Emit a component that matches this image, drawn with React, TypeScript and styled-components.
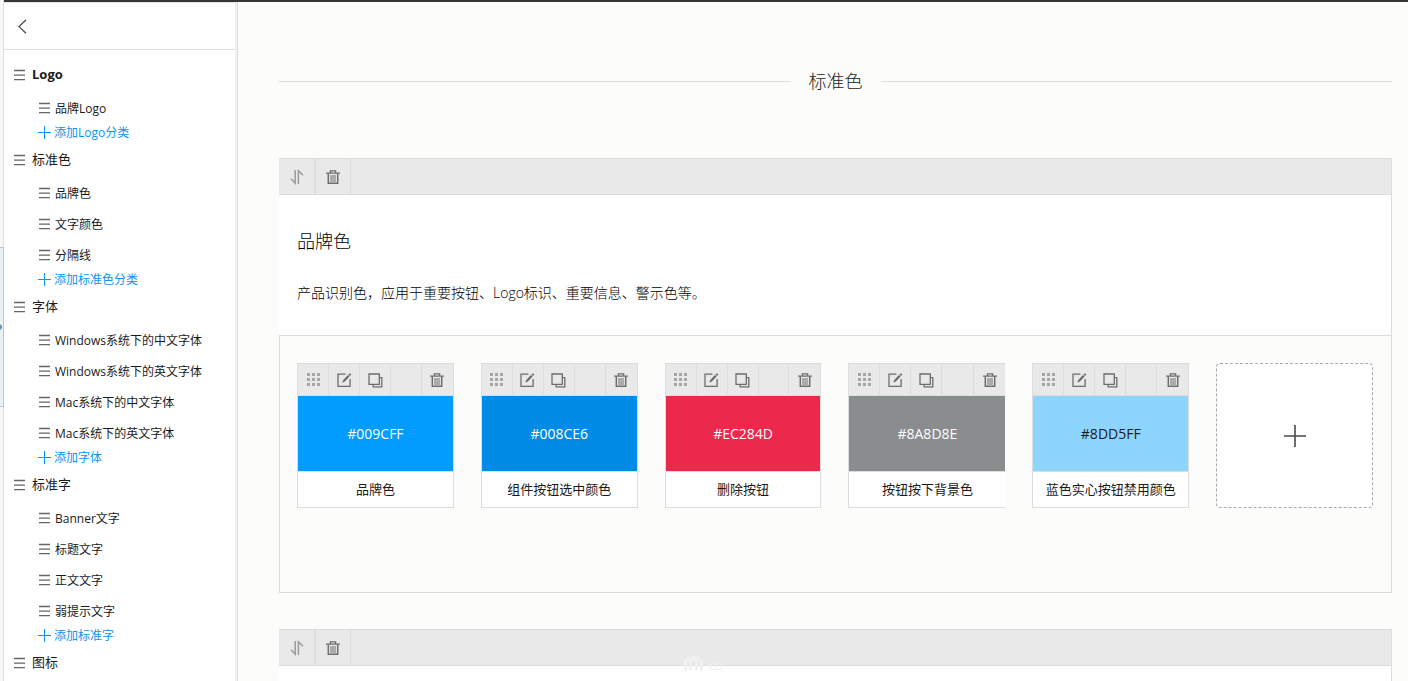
import React from 'react';
import styled, { createGlobalStyle } from 'styled-components';

const LINE = '#dddddd';

const GlobalStyle = createGlobalStyle`
  *, *::before, *::after { box-sizing: border-box; }
  body {
    margin: 0;
    background: #fcfcfa;
    color: #1a1a1a;
    font-family: "Open Sans", "Noto Sans CJK SC", sans-serif;
    font-size: 12px;
  }
  h1, h2, p, ul { margin: 0; padding: 0; }
  ul { list-style: none; }
  button { padding: 0; border: 0; background: none; font: inherit; color: inherit; cursor: pointer; }
  a { color: inherit; text-decoration: none; }
  svg { display: block; flex: none; }
`;

/* ---------- icons ---------- */

const MenuIcon = () => (
  <svg width="11" height="13" viewBox="0 0 11 13" stroke="#666" strokeWidth="1.4" aria-hidden="true">
    <path d="M0 2.5h11M0 7.1h11M0 11.6h11" />
  </svg>
);

const BackIcon = () => (
  <svg width="10" height="16" viewBox="0 0 10 16" fill="none" stroke="#444" strokeWidth="1.2" aria-hidden="true">
    <path d="M8 2 1 8.6l7 6.6" />
  </svg>
);

const PlusIcon = ({ size }: { size: number }) => (
  <svg width={size} height={size} viewBox={`0 0 ${size} ${size}`} stroke="currentColor" aria-hidden="true"
    strokeWidth={size > 16 ? 1.6 : 1.1}>
    <path d={`M0 ${size / 2}H${size}M${size / 2} 0V${size}`} />
  </svg>
);

const SortIcon = () => (
  <svg width="14" height="16" viewBox="0 0 14 16" fill="none" stroke="#9a9a9a" strokeWidth="1.5" aria-hidden="true">
    <path d="M5.2 1v13.2L1 9.8M8.4 15V1.8l4.6 4.4" />
  </svg>
);

const TrashIcon = () => (
  <svg width="14" height="16" viewBox="0 -1 14 16" fill="none" stroke="#6c6c6c" aria-hidden="true">
    <path strokeWidth="1.3" d="M0 3.1h14M4.4 3V.9h5.2V3" />
    <path strokeWidth="1.5" d="M2.3 3.5v9.8h9.4V3.5" />
    <path strokeWidth="1" d="M5 5v7M7 5v7M9 5v7" />
  </svg>
);

const EditIcon = () => (
  <svg width="15" height="16" viewBox="0 -1 15 16" fill="none" stroke="#6c6c6c" strokeWidth="1.3" aria-hidden="true">
    <path d="M8.5 1.2H1v12.2h12.1V6" />
    <path fill="#6c6c6c" stroke="none" d="M12.7.2l1.6 1.4-1.3 1.4-1.6-1.4zM10.9 2.1l1.7 1.5-4.8 5-2.6 1.1 1-2.7z" />
  </svg>
);

const CopyIcon = () => (
  <svg width="15" height="16" viewBox="0 -1 15 16" fill="none" stroke="#6c6c6c" strokeWidth="1.3" aria-hidden="true">
    <path d="M1 1h10.3v10.3H1zM12 4.7h1.8v9.2H5.2V12" />
  </svg>
);

const GridIcon = () => (
  <svg width="13" height="13" viewBox="0 0 13 13" fill="#a6a6a6" aria-hidden="true">
    {[0, 5, 10].map(y => [0, 5, 10].map(x => <rect key={`${x}-${y}`} x={x} y={y} width="3" height="3" />))}
  </svg>
);

/* ---------- frame ---------- */

const Page = styled.div`
  display: flex;
  height: 100vh;
  overflow: hidden;
`;

const Rail = styled.div`
  flex: none;
  width: 4px;
  padding-top: 247px;
  background: #f7f9f8;
  border-right: 1px solid #dcdfdf;
`;

const RailHandle = styled.button`
  display: flex;
  align-items: center;
  width: 4px;
  height: 160px;
  background: #ebf0f5;
  border: 1px solid #b9cad6;
  border-left: 0;
`;

const Workspace = styled.div`
  flex: 1;
  display: flex;
  min-width: 0;
  border-top: 2px solid #363636;
`;

/* ---------- sidebar ---------- */

const Sidebar = styled.nav`
  flex: none;
  width: 234px;
  overflow: hidden;
  background: #fff;
  border-top: 1px solid #e4e4e4;
  border-right: 1px solid ${LINE};
  box-shadow: inset -2px 0 0 #f1f1f1;
`;

const SidebarHead = styled.div`
  display: flex;
  align-items: center;
  height: 47px;
  margin-right: 2px;
  padding-left: 14px;
  border-bottom: 1px solid ${LINE};
`;

const Groups = styled.ul`
  padding-top: 6px;
`;

const GroupLink = styled.a<{ $active?: boolean }>`
  display: flex;
  align-items: center;
  gap: 7px;
  height: 36px;
  padding-left: 10px;
  font-size: 13px;
  line-height: 18px;
  font-weight: ${p => (p.$active ? 700 : 400)};
`;

const ItemLink = styled.a`
  display: flex;
  align-items: center;
  gap: 5px;
  height: 31px;
  padding-left: 35px;
`;

const AddButton = styled.button`
  display: flex;
  align-items: center;
  gap: 3px;
  height: 18px;
  padding-left: 34px;
  color: #0a96f5;
`;

/* ---------- content ---------- */

const Main = styled.main`
  flex: 1;
  min-width: 0;
  overflow: hidden;
  padding: 66px 16px 0 41px;
`;

const PageTitle = styled.h1`
  display: flex;
  align-items: center;
  gap: 18px;
  margin-bottom: 64px;
  font-size: 18px;
  line-height: 26px;
  font-weight: 300;
  color: #222;
  &::before, &::after {
    content: '';
    flex: 1;
    height: 1px;
    background: ${LINE};
  }
`;

const Section = styled.section`
  position: relative;
  margin-bottom: 36px;
`;

const SectionBar = styled.div`
  display: flex;
  height: 37px;
  background: #e9e9e9;
  border: 1px solid ${LINE};
  border-left: 0;
`;

const SectionTool = styled.button`
  display: flex;
  align-items: center;
  justify-content: center;
  width: 36px;
  border-right: 1px solid ${LINE};
  & + & { border-left: 1px solid ${LINE}; }
`;

const Intro = styled.div`
  min-height: 140px;
  padding: 33px 18px 0;
  background: #fff;
  border-right: 1px solid ${LINE};
`;

const SectionTitle = styled.h2`
  margin-bottom: 28px;
  font-size: 18px;
  line-height: 26px;
  font-weight: 300;
  color: #000;
`;

const SectionText = styled.p`
  font-size: 14px;
  line-height: 22px;
  font-weight: 300;
  color: #000;
`;

const Swatches = styled.ul`
  display: grid;
  grid-template-columns: repeat(6, 1fr);
  gap: 27px;
  padding: 27px 18px 84px 17px;
  border: 1px solid ${LINE};
`;

const Card = styled.li<{ $open?: boolean }>`
  height: 145px;
  background: #fff;
  border: 1px solid ${LINE};
  border-right-width: ${p => (p.$open ? 0 : 1)}px;
`;

const CardBar = styled.div`
  display: flex;
  height: 32px;
  background: #e9e9e9;
  border-bottom: 1px solid ${LINE};
`;

const CardTool = styled.button<{ $last?: boolean }>`
  display: flex;
  align-items: center;
  justify-content: center;
  width: ${p => (p.$last ? 32 : 31)}px;
  border-right: ${p => (p.$last ? 0 : 1)}px solid ${LINE};
  border-left: ${p => (p.$last ? 1 : 0)}px solid ${LINE};
  margin-left: ${p => (p.$last ? 'auto' : 0)};
`;

const Colour = styled.div<{ $fill: string; $ink: string }>`
  height: 75px;
  line-height: 76px;
  text-align: center;
  font-size: 14px;
  color: ${p => p.$ink};
  background: ${p => p.$fill};
`;

const CardName = styled.p`
  height: 36px;
  line-height: 34px;
  text-align: center;
  font-size: 13px;
  white-space: nowrap;
  border-top: 1px solid ${LINE};
`;

const AddCard = styled.button`
  display: flex;
  align-items: center;
  justify-content: center;
  width: 100%;
  height: 145px;
  color: #4a4a4a;
  background: #fff;
  border: 1px dashed #aaa;
  border-radius: 4px;
`;

const Watermark = styled.div`
  position: absolute;
  top: 26px;
  left: 405px;
  display: flex;
  align-items: center;
  gap: 3px;
  color: #f0f0f0;
  line-height: 20px;
`;

/* ---------- data ---------- */

const groups = [
  { name: 'Logo', items: ['品牌Logo'], add: '添加Logo分类' },
  { name: '标准色', items: ['品牌色', '文字颜色', '分隔线'], add: '添加标准色分类' },
  {
    name: '字体',
    items: ['Windows系统下的中文字体', 'Windows系统下的英文字体', 'Mac系统下的中文字体', 'Mac系统下的英文字体'],
    add: '添加字体',
  },
  { name: '标准字', items: ['Banner文字', '标题文字', '正文文字', '弱提示文字'], add: '添加标准字' },
  { name: '图标', items: [], add: '' },
];

const swatches = [
  { hex: '#009CFF', name: '品牌色', ink: '#fff' },
  { hex: '#008CE6', name: '组件按钮选中颜色', ink: '#fff' },
  { hex: '#EC284D', name: '删除按钮', ink: '#fff' },
  { hex: '#8A8D8E', name: '按钮按下背景色', ink: '#fff', open: true },
  { hex: '#8DD5FF', name: '蓝色实心按钮禁用颜色', ink: '#1a1a1a' },
];

const SectionTools = () => (
  <SectionBar>
    <SectionTool aria-label="排序"><SortIcon /></SectionTool>
    <SectionTool aria-label="删除"><TrashIcon /></SectionTool>
  </SectionBar>
);

export default function App() {
  return (
    <>
      <GlobalStyle />
      <Page>
        <Rail>
          <RailHandle aria-label="展开">
            <svg width="2" height="6" viewBox="0 0 2 6" fill="#5f93b3" aria-hidden="true">
              <path d="M0 0l2 2v2L0 6z" />
            </svg>
          </RailHandle>
        </Rail>
        <Workspace>
          <Sidebar>
            <SidebarHead>
              <button aria-label="返回"><BackIcon /></button>
            </SidebarHead>
            <Groups>
              {groups.map((g, i) => (
                <li key={g.name}>
                  <GroupLink href="#" $active={i === 0}><MenuIcon />{g.name}</GroupLink>
                  {g.items.map(item => (
                    <ItemLink href="#" key={item}><MenuIcon />{item}</ItemLink>
                  ))}
                  {g.add && <AddButton><PlusIcon size={13} />{g.add}</AddButton>}
                </li>
              ))}
            </Groups>
          </Sidebar>
          <Main>
            <PageTitle>标准色</PageTitle>
            <Section>
              <SectionTools />
              <Intro>
                <SectionTitle>品牌色</SectionTitle>
                <SectionText>产品识别色，应用于重要按钮、Logo标识、重要信息、警示色等。</SectionText>
              </Intro>
              <Swatches>
                {swatches.map(s => (
                  <Card key={s.hex} $open={s.open}>
                    <CardBar>
                      <CardTool aria-label="拖动"><GridIcon /></CardTool>
                      <CardTool aria-label="编辑"><EditIcon /></CardTool>
                      <CardTool aria-label="复制"><CopyIcon /></CardTool>
                      <CardTool aria-label="删除" $last><TrashIcon /></CardTool>
                    </CardBar>
                    <Colour $fill={s.hex} $ink={s.ink}>{s.hex}</Colour>
                    <CardName>{s.name}</CardName>
                  </Card>
                ))}
                <li>
                  <AddCard aria-label="添加颜色"><PlusIcon size={22} /></AddCard>
                </li>
              </Swatches>
            </Section>
            <Section>
              <SectionTools />
              <Intro />
              <Watermark aria-hidden="true">
                <svg width="19" height="21" viewBox="0 0 19 21" fill="currentColor">
                  <path d="M9.5 0L19 5v10l-3 2V6h-2v9h-3V6H8v9H5V6H3v11l-3-2V5z" />
                </svg>
                ·co
              </Watermark>
            </Section>
          </Main>
        </Workspace>
      </Page>
    </>
  );
}
